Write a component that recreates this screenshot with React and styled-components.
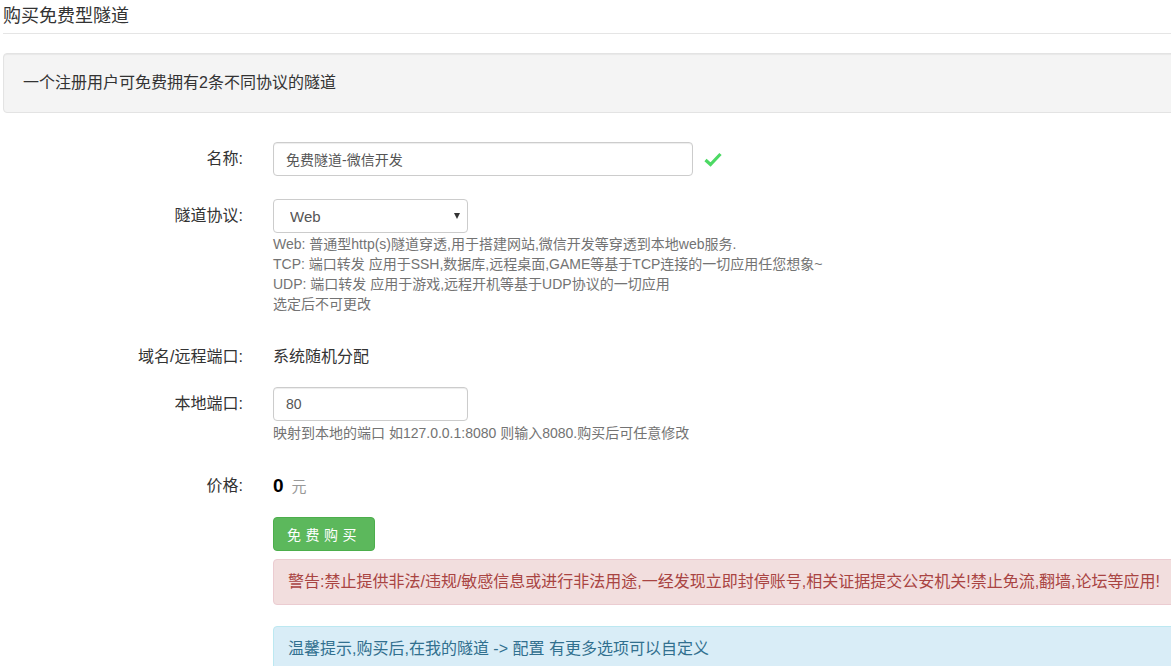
import styled, { createGlobalStyle } from "styled-components";

const GlobalStyle = createGlobalStyle`
  html, body {
    margin: 0;
    padding: 0;
    background: #fff;
    overflow: hidden;
  }
  body {
    font-family: "Liberation Sans", "Noto Sans CJK SC", sans-serif;
    color: #333;
    font-size: 16px;
  }
`;

const Page = styled.div`
  width: 1190px;
  padding-left: 3px;
`;

const Title = styled.h3`
  margin: 0;
  font-size: 18px;
  font-weight: normal;
  line-height: 33px;
  color: #333;
  border-bottom: 1px solid #e5e5e5;
`;

const Well = styled.div`
  margin-top: 19px;
  padding: 18px 19px;
  line-height: 22px;
  font-size: 16px;
  background: #f4f4f4;
  border: 1px solid #e3e3e3;
  border-radius: 4px;
  box-shadow: inset 0 1px 1px rgba(0, 0, 0, 0.05);
`;

const Form = styled.form`
  margin-top: 29px;
`;

const Row = styled.div`
  display: grid;
  grid-template-columns: 240px 1fr;
  column-gap: 30px;
  align-items: start;
  margin-bottom: ${(p) => p.$mb || 0}px;
`;

const Label = styled.label`
  text-align: right;
  font-size: 16px;
  line-height: 34px;
  color: #333;
`;

const Control = styled.div`
  grid-column: ${(p) => (p.$offset ? "2" : "auto")};
  min-width: 0;
`;

const InputLine = styled.div`
  display: flex;
  align-items: center;
  gap: 11px;
`;

const Input = styled.input`
  box-sizing: border-box;
  width: ${(p) => p.$w}px;
  height: 34px;
  padding: 0 12px;
  font-family: inherit;
  font-size: 14px;
  color: #555;
  border: 1px solid #ccc;
  border-radius: 4px;
  outline: none;
  box-shadow: inset 0 1px 1px rgba(0, 0, 0, 0.075);
`;

const SelectWrap = styled.div`
  position: relative;
  width: 195px;
`;

const Select = styled.select`
  box-sizing: border-box;
  width: 100%;
  height: 34px;
  padding: 0 16px;
  font-family: inherit;
  font-size: 15px;
  color: #555;
  background: #fff;
  border: 1px solid #ccc;
  border-radius: 4px;
  appearance: none;
  outline: none;
`;

const Caret = styled.span`
  position: absolute;
  right: 8px;
  top: 14px;
  width: 0;
  height: 0;
  border-left: 3px solid transparent;
  border-right: 3px solid transparent;
  border-top: 6px solid #333;
  pointer-events: none;
`;

const Help = styled.div`
  margin-top: ${(p) => p.$mt || 0}px;
  font-size: 14px;
  line-height: 20px;
  color: #737373;
`;

const Static = styled.div`
  font-size: 16px;
  line-height: 34px;
  color: #333;
`;

const Price = styled.div`
  line-height: 34px;
  display: flex;
  align-items: baseline;
  gap: 8px;
`;

const Amount = styled.strong`
  font-size: 19px;
  color: #000;
`;

const Unit = styled.span`
  font-size: 15px;
  color: #999;
`;

const Button = styled.button`
  box-sizing: border-box;
  width: 102px;
  height: 34px;
  font-family: inherit;
  font-size: 14px;
  letter-spacing: 4.5px;
  padding: 0;
  color: #fff;
  background: #5cb85c;
  border: 1px solid #4cae4c;
  border-radius: 4px;
  cursor: pointer;
`;

const tones = {
  danger: { bg: "#f2dede", border: "#ebccd1", color: "#a94442" },
  info: { bg: "#d9edf7", border: "#bce8f1", color: "#31708f" },
};

const Alert = styled.div`
  margin-top: ${(p) => p.$mt}px;
  padding: 11px 14px;
  font-size: 16px;
  line-height: 22px;
  white-space: nowrap;
  background: ${(p) => tones[p.$tone].bg};
  border: 1px solid ${(p) => tones[p.$tone].border};
  border-radius: 4px;
  color: ${(p) => tones[p.$tone].color};
`;

function Check() {
  return (
    <svg width="18" height="15" viewBox="0 0 18 15">
      <path d="M1.5 8 L6.5 12.5 L16.5 2" fill="none" stroke="#4cd964" strokeWidth="3.2" />
    </svg>
  );
}

export default function App() {
  return (
    <>
      <GlobalStyle />
      <Page>
        <Title>购买免费型隧道</Title>
        <Well>一个注册用户可免费拥有2条不同协议的隧道</Well>
        <Form onSubmit={(e) => e.preventDefault()}>
          <Row $mb={23}>
            <Label>名称:</Label>
            <Control>
              <InputLine>
                <Input $w={420} defaultValue="免费隧道-微信开发" />
                <Check />
              </InputLine>
            </Control>
          </Row>
          <Row $mb={26}>
            <Label>隧道协议:</Label>
            <Control>
              <SelectWrap>
                <Select defaultValue="web">
                  <option value="web">Web</option>
                  <option value="tcp">TCP</option>
                  <option value="udp">UDP</option>
                </Select>
                <Caret />
              </SelectWrap>
              <Help $mt={1}>
                Web: 普通型http(s)隧道穿透,用于搭建网站,微信开发等穿透到本地web服务.
                <br />
                TCP: 端口转发 应用于SSH,数据库,远程桌面,GAME等基于TCP连接的一切应用任您想象~
                <br />
                UDP: 端口转发 应用于游戏,远程开机等基于UDP协议的一切应用
                <br />
                选定后不可更改
              </Help>
            </Control>
          </Row>
          <Row $mb={13}>
            <Label>域名/远程端口:</Label>
            <Control>
              <Static>系统随机分配</Static>
            </Control>
          </Row>
          <Row $mb={26}>
            <Label>本地端口:</Label>
            <Control>
              <Input $w={195} defaultValue="80" />
              <Help $mt={2}>映射到本地的端口 如127.0.0.1:8080 则输入8080.购买后可任意修改</Help>
            </Control>
          </Row>
          <Row $mb={13}>
            <Label>价格:</Label>
            <Control>
              <Price>
                <Amount>0</Amount>
                <Unit>元</Unit>
              </Price>
            </Control>
          </Row>
          <Row>
            <Control $offset>
              <Button type="submit">免费购买</Button>
              <Alert $tone="danger" $mt={8}>
                警告:禁止提供非法/违规/敏感信息或进行非法用途,一经发现立即封停账号,相关证据提交公安机关!禁止免流,翻墙,论坛等应用!
              </Alert>
              <Alert $tone="info" $mt={21}>
                温馨提示,购买后,在我的隧道 -&gt; 配置 有更多选项可以自定义
              </Alert>
            </Control>
          </Row>
        </Form>
      </Page>
    </>
  );
}
